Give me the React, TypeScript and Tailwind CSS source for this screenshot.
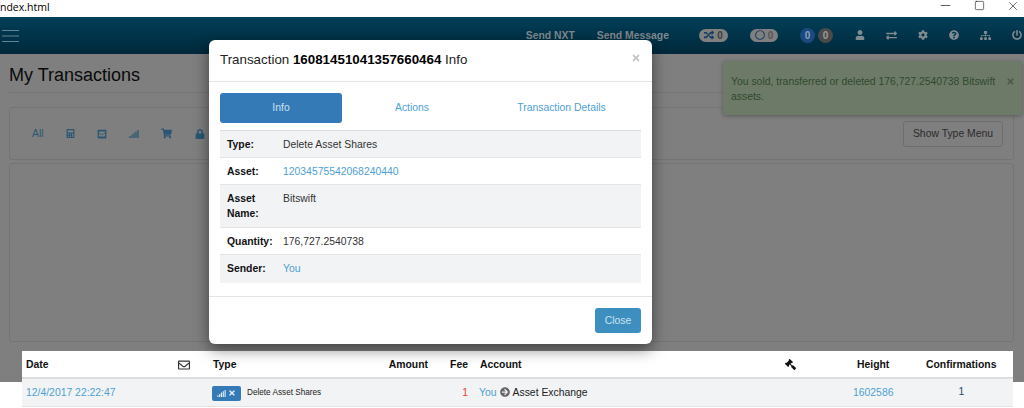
import {
  FaCalculator,
  FaEnvelopeSquare,
  FaSignal,
  FaShoppingCart,
  FaLock,
  FaTimes,
  FaArrowCircleRight,
  FaGavel,
  FaRegEnvelope,
  FaUser,
  FaExchangeAlt,
  FaCog,
  FaQuestionCircle,
  FaSitemap,
  FaPowerOff,
  FaRandom,
  FaRegCircle,
} from "react-icons/fa";
import { Minus, Square, X } from "lucide-react";

const font = "font-['Liberation_Sans',Arial,sans-serif]";

// rows of the info table in the modal
const infoRows = [
  { label: "Type:", value: "Delete Asset Shares", h: "h-[27px]", striped: true },
  { label: "Asset:", value: "12034575542068240440", link: true, h: "h-[27px]" },
  { label: "Asset Name:", value: "Bitswift", h: "h-[43px]", striped: true },
  { label: "Quantity:", value: "176,727.2540738", h: "h-[27px]" },
  { label: "Sender:", value: "You", link: true, h: "h-[28px]", striped: true },
];

function TitleBar() {
  return (
    <div className="flex h-[17px] items-start justify-between bg-white text-black">
      <span className="pt-[1px] font-['Open_Sans',sans-serif] text-[10.5px] leading-[12px]">ndex.html</span>
      <div className="flex items-center gap-[21px] pr-[4px]">
        <Minus size={15} strokeWidth={1} className="mt-[-2px]" />
        <Square size={11} strokeWidth={1.2} className="mt-[-2px]" />
        <X size={14} strokeWidth={1} className="mt-[-2px]" />
      </div>
    </div>
  );
}

function NavBar() {
  return (
    <div className="flex h-[37px] items-center bg-gradient-to-b from-[#023f58] to-[#00293b] pl-[2px] text-[#7f8b91]">
      <svg width="18" height="14" viewBox="0 0 18 14" stroke="#5f8595" strokeWidth="1.2">
        <path d="M0 1.5h17M0 7h17M0 12.5h17" />
      </svg>
      <div className="ml-auto flex items-center pr-[2px] text-[10.4px] font-bold text-[#80898f]">
        <span className="mr-[22px]">Send NXT</span>
        <span className="mr-[30px]">Send Message</span>
        <span className="mr-[22px] flex h-[13px] w-[29px] items-center justify-center gap-[3px] rounded-full bg-[#808080] text-[10px] text-[#3d3d3d]">
          <FaRandom size={10} className="text-[#143c63]" />0
        </span>
        <span className="mr-[22px] flex h-[13px] w-[28px] items-center justify-center gap-[3px] rounded-full bg-[#808080] text-[10px] text-[#555]">
          <FaRegCircle size={10} className="text-[#143c63]" />0
        </span>
        <span className="mr-[3px] flex h-[15px] w-[15px] items-center justify-center rounded-full bg-[#1c4a80] text-[10px] text-[#8aa0b5]">0</span>
        <span className="mr-[22px] flex h-[15px] w-[15px] items-center justify-center rounded-full bg-[#4a4a4a] text-[10px] text-[#9a9a9a]">0</span>
        <div className="flex items-center gap-[21px] text-[#7f8b91]">
          <FaUser size={10} />
          <FaExchangeAlt size={11} />
          <FaCog size={10} />
          <FaQuestionCircle size={10} />
          <FaSitemap size={11} />
          <FaPowerOff size={10} />
        </div>
      </div>
    </div>
  );
}

function Backdrop() {
  return (
    <div className="h-[328px] bg-[#7f7f7f] pt-[11px] pr-[10px] pl-[9px]">
      <h1 className="h-[28px] border-b border-[#747474] text-[18px] leading-[21px] text-[#0a0a0a]">My Transactions</h1>
      <div className="mt-[14px] flex h-[53px] items-center rounded-[3px] border border-[#747474] pr-[10px] pl-[22px] text-[#2a5673]">
        <span className="mr-[22px] text-[10.4px]">All</span>
        <div className="flex items-center gap-[22px]">
          <FaCalculator size={9} />
          <FaEnvelopeSquare size={10} />
          <FaSignal size={10} />
          <FaShoppingCart size={11} />
          <FaLock size={10} className="ml-[1px]" />
        </div>
        <span className="ml-auto flex h-[26px] w-[100px] items-center justify-center rounded-[3px] border border-[#6e6e6e] text-[10.4px] text-[#2b2b2b]">
          Show Type Menu
        </span>
      </div>
      <div className="mt-[3px] h-[179px] rounded-[3px] border border-[#747474]" />
    </div>
  );
}

function Modal() {
  return (
    <div className="absolute top-[40px] left-[209px] flex h-[304px] w-[443px] flex-col rounded-[6px] bg-white shadow-[0_5px_15px_rgba(0,0,0,0.5)]">
      <div className="flex h-[42px] items-center justify-between border-b border-[#e5e5e5] px-[11px]">
        <span className="text-[13.35px] text-[#222]">
          Transaction <b className="text-black">16081451041357660464</b> Info
        </span>
        <FaTimes size={10} className="mb-[5px] text-[#c4c4c4]" />
      </div>
      <div className="flex px-[11px] pt-[11px] text-[10.4px] text-[#4e9fd4]">
        <div className="flex h-[30px] w-[122px] items-center justify-center rounded-[3px] bg-[#337ab7] text-[#cfe0ee]">Info</div>
        <div className="flex h-[30px] w-[140px] items-center justify-center">Actions</div>
        <div className="flex h-[30px] w-[159px] items-center justify-center">Transaction Details</div>
      </div>
      <div className="mx-[11px] mt-[7px] border-t border-[#dddddd] text-[10.4px] text-[#333]">
        {infoRows.map((row) => (
          <div key={row.label} className={`flex border-b border-[#e4e4e4] last:border-b-0 ${row.h} ${row.striped ? "bg-[#f2f3f5]" : "bg-white"}`}>
            <span className="w-[63px] pt-[6px] pl-[7px] leading-[15px] font-bold text-[#111]">{row.label}</span>
            <span className={`pt-[6px] leading-[15px] ${row.link ? "text-[#4e9fd4]" : ""}`}>{row.value}</span>
          </div>
        ))}
      </div>
      <div className="mt-[13px] flex flex-1 justify-end border-t border-[#e5e5e5] pt-[11px] pr-[11px]">
        <span className="flex h-[25px] w-[46px] items-center justify-center rounded-[3px] bg-[#3d8fc0] text-[10.4px] text-[#cde2ef]">Close</span>
      </div>
    </div>
  );
}

function TxTable() {
  return (
    <div className="absolute top-[351px] left-[22px] h-[57px] w-[991px] bg-white text-[10.4px]">
      <div className="flex h-[28px] items-center border-b-2 border-[#dddddd] pt-[1px] font-bold text-[#111]">
        <span className="w-[156px] pl-[4px]">Date</span>
        <span className="w-[35px]"><FaRegEnvelope size={12} className="text-[#333]" /></span>
        <span className="w-[150px]">Type</span>
        <span className="w-[65px] text-right">Amount</span>
        <span className="w-[40px] text-right">Fee</span>
        <span className="ml-[12px] w-[305px]">Account</span>
        <span className="w-[72px]"><FaGavel size={11} className="-scale-x-100 text-[#111]" /></span>
        <span className="w-[32px]">Height</span>
        <span className="ml-[37px] w-[70px]">Confirmations</span>
      </div>
      <div className="flex h-[28px] items-center border-b border-[#e4e4e4] bg-[#f2f3f5] text-[#333]">
        <span className="w-[190px] pl-[4px] text-[#4e9fd4]">12/4/2017 22:22:47</span>
        <span className="mt-[1px] flex h-[15px] w-[29px] items-center justify-center gap-[2px] rounded-[2px] bg-[#337ab7] text-[#e3edf5]">
          <FaSignal size={9} />
          <FaTimes size={8} />
        </span>
        <span className="mt-[2px] ml-[6px] w-[153px] text-[8.2px] text-[#222]">Delete Asset Shares</span>
        <span className="ml-[60px] w-[8px] text-right text-[#e83c2a]">1</span>
        <span className="ml-[11px] flex w-[374px] items-center gap-[3px] text-[#222]">
          <span className="text-[#4e9fd4]">You</span>
          <FaArrowCircleRight size={10} className="text-[#666]" />
          Asset Exchange
        </span>
        <span className="text-[#4e9fd4]">1602586</span>
        <span className="mb-[2px] ml-[65px] text-[#1d4a66]">1</span>
      </div>
    </div>
  );
}

function Toast() {
  return (
    <div className="absolute top-[61px] left-[723px] flex h-[54px] w-[299px] justify-between rounded-[3px] bg-[#6d7a68] pt-[13px] pr-[7px] pl-[8px] text-[10.4px] leading-[15px] text-[#2f4a2c] shadow-[0_1px_4px_rgba(0,0,0,0.3)]">
      <span className="w-[270px]">You sold, transferred or deleted 176,727.2540738 Bitswift assets.</span>
      <FaTimes size={9} className="mt-[3px] text-[#505a4c]" />
    </div>
  );
}

export default function App() {
  return (
    <div className={`relative h-[408px] w-[1024px] overflow-hidden bg-white ${font}`}>
      <TitleBar />
      <NavBar />
      <Backdrop />
      <TxTable />
      <Toast />
      <Modal />
    </div>
  );
}
